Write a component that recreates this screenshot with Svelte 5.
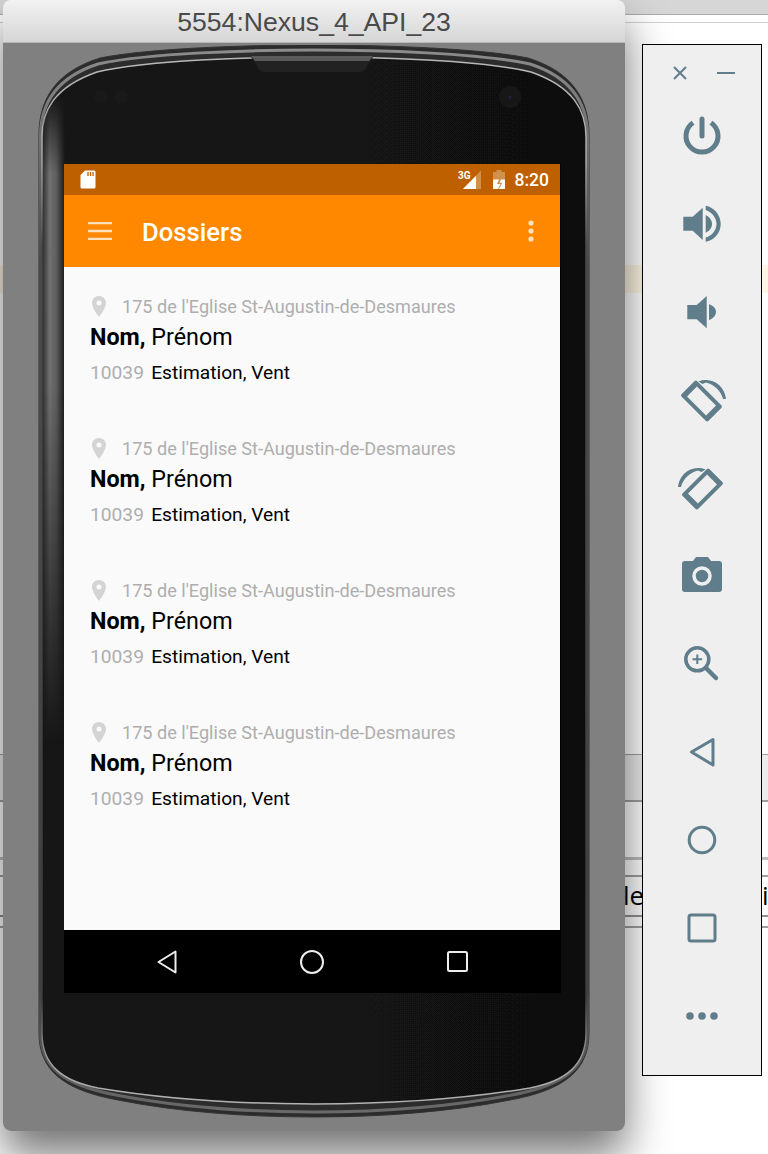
<script lang="ts">
  const rows = [1, 2, 3, 4];
  const bgLines = [
    { y: 754, h: 1, c: "#a0a0a0" },
    { y: 800, h: 2, c: "#a0a0a0" },
    { y: 857, h: 3, c: "#bdbdbd" },
    { y: 875, h: 2, c: "#a0a0a0" },
    { y: 915, h: 2, c: "#909090" },
    { y: 926, h: 2, c: "#a0a0a0" }
  ];
  const outerPath =
    "M1 90 C1 55 17 27 62 13 C112 3 212 0 276 0 C340 0 440 3 490 13 C535 27 551 55 551 90 L551 988 C551 1025 527 1045 472 1055 C412 1067 342 1072 276 1072 C210 1072 140 1067 80 1055 C25 1045 1 1025 1 988 Z";
  const midPath =
    "M2.5 91 C2.5 60 17 33 60 19 C111 8 212 5 276 5 C340 5 441 8 492 19 C535 33 549.5 60 549.5 91 L549.5 988 C549.5 1022 527 1040 474 1050 C412 1062 342 1067 276 1067 C210 1067 140 1062 78 1050 C25 1040 2.5 1022 2.5 988 Z";
  const innerPath =
    "M4 92 C4 66 16 42 59 27 C110 15 212 12 276 12 C340 12 442 15 493 27 C536 42 548 66 548 92 L548 988 C548 1020 528 1036 492 1043 C420 1055 340 1059 276 1059 C212 1059 132 1055 60 1043 C24 1036 4 1020 4 988 Z";
  const rotatePhone =
    "M2.5 10 H36.5 Q38.5 10 38.5 12 V30 Q38.5 32 36.5 32 H2.5 Q0.5 32 0.5 30 V12 Q0.5 10 2.5 10 Z M6 14 V28 H33 V14 Z";
  const rotateArc = "M16.5 1.5 C30 -4 43 6 44 19 L41 19 C39 11 33 5 24 2.5 L20.5 4 Z";
</script>

<div class="desktop">
  <div class="bg-top"></div>
  <div class="bg-top-line"></div>
  <div class="bg-fill"></div>
  {#each bgLines as line}
    <div class="bg-line" style="top: {line.y}px; height: {line.h}px; background: {line.c}"></div>
  {/each}
  <div class="bg-band"></div>
  <span class="bg-text">le</span>
  <span class="bg-text right">i</span>

  <section class="emulator">
    <header class="titlebar">5554:Nexus_4_API_23</header>
    <div class="stage">
      <svg class="phone" width="552" height="1074" viewBox="0 0 552 1074">
        <defs>
          <linearGradient id="rim" x1="0" y1="0" x2="0" y2="1">
            <stop offset="0" stop-color="#8c8c8c" />
            <stop offset="0.08" stop-color="#707070" />
            <stop offset="0.2" stop-color="#4a4a4a" />
            <stop offset="0.88" stop-color="#404040" />
            <stop offset="1" stop-color="#6a6a6a" />
          </linearGradient>
          <linearGradient id="shine" x1="0" y1="0" x2="0" y2="1">
            <stop offset="0" stop-color="#b8b8b8" />
            <stop offset="0.1" stop-color="#a8a8a8" />
            <stop offset="0.18" stop-color="#4a4a4a" />
            <stop offset="0.9" stop-color="#3c3c3c" />
            <stop offset="0.96" stop-color="#a0a0a0" />
            <stop offset="1" stop-color="#b4b4b4" />
          </linearGradient>
          <linearGradient id="glass" x1="0" y1="0" x2="1" y2="0">
            <stop offset="0" stop-color="#141414" />
            <stop offset="0.9" stop-color="#111" />
            <stop offset="0.97" stop-color="#090909" />
            <stop offset="1" stop-color="#0c0c0c" />
          </linearGradient>
          <linearGradient id="band" x1="0" y1="0" x2="1" y2="0">
            <stop offset="0" stop-color="#333" />
            <stop offset="0.3" stop-color="#707070" />
            <stop offset="0.6" stop-color="#5e5e5e" />
            <stop offset="1" stop-color="#161616" />
          </linearGradient>
          <linearGradient id="bandFade" x1="0" y1="0" x2="0" y2="1">
            <stop offset="0" stop-color="#000" />
            <stop offset="0.12" stop-color="#fff" />
            <stop offset="0.45" stop-color="#fff" />
            <stop offset="1" stop-color="#000" />
          </linearGradient>
          <mask id="bandMask" maskUnits="userSpaceOnUse" x="0" y="50" width="40" height="650">
            <rect x="0" y="50" width="40" height="650" fill="url(#bandFade)" />
          </mask>
          <clipPath id="innerClip"><path d={innerPath} /></clipPath>
          <filter id="soft" x="-2%" y="-2%" width="104%" height="104%">
            <feGaussianBlur stdDeviation="0.6" />
          </filter>
        </defs>
        <path d={outerPath} fill="#2c2c2c" stroke="#333" stroke-width="1" />
        <path d={midPath} fill="none" stroke="url(#rim)" stroke-width="3" filter="url(#soft)" />
        <path d={innerPath} fill="url(#glass)" stroke="url(#shine)" stroke-width="1.5" filter="url(#soft)" />
        <g clip-path="url(#innerClip)">
          <rect x="5" y="50" width="22" height="650" fill="url(#band)" mask="url(#bandMask)" />
        </g>
        <path d="M213 12 H335 L329 21 Q327 27 320 27 H228 Q221 27 219 21 Z" fill="#222" />
        <path d="M213 11 H335 L331 16 H217 Z" fill="#5a5a5a" />
        <circle cx="63" cy="52" r="7" fill="#191919" />
        <circle cx="83" cy="52" r="7" fill="#191919" />
        <circle cx="472" cy="52" r="11" fill="#171717" />
        <circle cx="472" cy="52" r="1.5" fill="#20204a" />
      </svg>

      <div class="screen">
        <div class="statusbar">
          <svg width="16" height="19" viewBox="0 0 16 19">
            <path d="M5 0.5 H14 Q15.5 0.5 15.5 2 V17 Q15.5 18.5 14 18.5 H2 Q0.5 18.5 0.5 17 V5 Z" fill="#fff" />
            <path d="M8 2 V6 M10.5 2 V6 M13 2 V6" stroke="#bf6000" stroke-width="1.3" />
          </svg>
          <div class="status-right">
            <svg class="signal" width="24" height="20" viewBox="0 0 24 20">
              <path d="M5 19 L23 0.5 V19 Z" fill="#fff" fill-opacity="0.3" />
              <path d="M5 19 L18 5.7 V19 Z" fill="#fff" />
              <text x="0" y="8.5" class="threeg">3G</text>
            </svg>
            <svg class="battery" width="12" height="19" viewBox="0 0 12 19">
              <path d="M3.5 0 H8.5 V2 H12 V19 H0 V2 H3.5 Z" fill="#fff" fill-opacity="0.3" />
              <path d="M0 9.5 H6 L4 14 H7.5 L5 19 H0 Z M8 9.5 H12 V19 H6 L9.2 12.8 H6.5 Z" fill="#fff" />
            </svg>
            <span class="time">8:20</span>
          </div>
        </div>

        <div class="appbar">
          <svg width="24" height="18" viewBox="0 0 24 18">
            <path d="M0 1 H24 M0 9 H24 M0 17 H24" stroke="#ffe0bc" stroke-width="2.4" />
          </svg>
          <h1>Dossiers</h1>
          <svg class="overflow" width="6" height="22" viewBox="0 0 6 22">
            <circle cx="3" cy="3" r="2.6" fill="#ffe0bc" />
            <circle cx="3" cy="11" r="2.6" fill="#ffe0bc" />
            <circle cx="3" cy="19" r="2.6" fill="#ffe0bc" />
          </svg>
        </div>

        <div class="list">
          {#each rows as r (r)}
            <article class="row">
              <div class="address">
                <svg width="14" height="21" viewBox="0 0 14 21">
                  <path fill-rule="evenodd" d="M7 0 C3 0 0 3 0 7 C0 12 7 21 7 21 C7 21 14 12 14 7 C14 3 11 0 7 0 Z M7 4.5 A2.5 2.5 0 1 1 7 9.5 A2.5 2.5 0 1 1 7 4.5 Z" fill="#d4d4d4" />
                </svg>
                <span>175 de l'Eglise St-Augustin-de-Desmaures</span>
              </div>
              <div class="name"><strong>Nom,</strong> Prénom</div>
              <div class="file"><span class="num">10039</span> Estimation, Vent</div>
            </article>
          {/each}
        </div>

        <nav class="navbar">
          <svg width="20" height="24" viewBox="0 0 20 24">
            <path d="M1.5 12 L18.5 1.5 V22.5 Z" fill="none" stroke="#eee" stroke-width="2" stroke-linejoin="round" />
          </svg>
          <svg width="24" height="24" viewBox="0 0 24 24">
            <circle cx="12" cy="12" r="11" fill="none" stroke="#eee" stroke-width="2" />
          </svg>
          <svg width="21" height="21" viewBox="0 0 21 21">
            <rect x="1" y="1" width="19" height="19" rx="1.5" fill="none" stroke="#eee" stroke-width="2" />
          </svg>
        </nav>
      </div>
    </div>
  </section>

  <aside class="toolbar">
    <div class="win-controls">
      <svg width="14" height="14" viewBox="0 0 14 14">
        <path d="M1 1 L13 13 M13 1 L1 13" stroke="#607d8b" stroke-width="2" />
      </svg>
      <svg width="18" height="14" viewBox="0 0 18 14">
        <path d="M0 7 H18" stroke="#607d8b" stroke-width="2" />
      </svg>
    </div>
    <div class="tools">
      <svg viewBox="0 0 40 40" width="40" height="40">
        <path d="M11.05 6.74 A16 16 0 1 0 28.95 6.74" fill="none" stroke="#607d8b" stroke-width="5" />
        <path d="M20 3 V20" stroke="#607d8b" stroke-width="5" stroke-linecap="round" />
      </svg>
      <svg viewBox="0 0 40 40" width="40" height="40">
        <path d="M1.3 12.7 H10.7 L20.7 3.7 V36 L10.7 26.7 H1.3 Z" fill="#607d8b" />
        <path d="M23.7 11 C27 12.5 30 16 30 20 C30 24 27 27.3 23.7 28.7 Z" fill="#607d8b" />
        <path d="M23.7 1.7 C32 3 38.7 11 38.7 20 C38.7 29 32 36.5 23.7 37.7 V33.5 C30 32 34.5 26 34.5 20 C34.5 14 30 8 23.7 6 Z" fill="#607d8b" />
      </svg>
      <svg viewBox="0 0 40 40" width="40" height="40">
        <path d="M5.3 13 H14.7 L24.7 4 V36.3 L14.7 27.3 H5.3 Z" fill="#607d8b" />
        <path d="M27 12.3 C31 13.5 34 16.5 34 20 C34 23.5 31 26.8 27 28 Z" fill="#607d8b" />
      </svg>
      <svg class="over" viewBox="0 0 40 40" width="40" height="40">
        <g transform="rotate(45 19.5 21)">
          <path fill-rule="evenodd" fill="#607d8b" d={rotatePhone} />
        </g>
        <path d={rotateArc} fill="#607d8b" />
      </svg>
      <svg class="over" viewBox="0 0 40 40" width="40" height="40">
        <g transform="matrix(-1 0 0 1 40 0)">
          <g transform="rotate(45 19.5 21)">
            <path fill-rule="evenodd" fill="#607d8b" d={rotatePhone} />
          </g>
          <path d={rotateArc} fill="#607d8b" />
        </g>
      </svg>
      <svg viewBox="0 0 40 40" width="40" height="40">
        <path d="M3 5 H11 L14 1 H26 L29 5 H37 Q40 5 40 8 V33 Q40 36 37 36 H3 Q0 36 0 33 V8 Q0 5 3 5 Z" fill="#607d8b" />
        <circle cx="20" cy="20" r="8" fill="#607d8b" stroke="#efefef" stroke-width="3.5" />
      </svg>
      <svg viewBox="0 0 40 40" width="40" height="40">
        <circle cx="15.3" cy="15.3" r="11.5" fill="none" stroke="#607d8b" stroke-width="3.5" />
        <path d="M10.5 15.3 H20.1 M15.3 10.5 V20.1" stroke="#607d8b" stroke-width="2" />
        <path d="M24 24 L34 34" stroke="#607d8b" stroke-width="4.5" stroke-linecap="round" />
      </svg>
      <svg viewBox="0 0 40 40" width="40" height="40">
        <path d="M9.5 20 L31 7.5 V33 Z" fill="none" stroke="#607d8b" stroke-width="3" stroke-linejoin="round" />
      </svg>
      <svg viewBox="0 0 40 40" width="40" height="40">
        <circle cx="20" cy="20" r="12.8" fill="none" stroke="#607d8b" stroke-width="3" />
      </svg>
      <svg viewBox="0 0 40 40" width="40" height="40">
        <rect x="7" y="7" width="26" height="26" rx="2" fill="none" stroke="#607d8b" stroke-width="3" />
      </svg>
      <svg viewBox="0 0 40 40" width="40" height="40">
        <circle cx="8" cy="20" r="3.8" fill="#607d8b" />
        <circle cx="20" cy="20" r="3.8" fill="#607d8b" />
        <circle cx="32" cy="20" r="3.8" fill="#607d8b" />
      </svg>
    </div>
  </aside>
</div>

<style>
  :global(body) {
    margin: 0;
    background: #fff;
  }

  .desktop {
    position: relative;
    width: 768px;
    height: 1154px;
    overflow: hidden;
    background: #fff;
    font-family: Roboto, "Liberation Sans", sans-serif;
  }

  .bg-top {
    position: absolute;
    left: 0;
    right: 0;
    top: 0;
    height: 14px;
    background: #d6d6d6;
    border-bottom: 1px solid #ababab;
  }

  .bg-top-line {
    position: absolute;
    left: 0;
    right: 0;
    top: 22px;
    height: 1px;
    background: #d0d0d0;
  }

  .bg-fill {
    position: absolute;
    left: 0;
    right: 0;
    top: 755px;
    height: 45px;
    background: #ececec;
  }

  .bg-line {
    position: absolute;
    left: 0;
    right: 0;
  }

  .bg-band {
    position: absolute;
    left: 0;
    right: 0;
    top: 265px;
    height: 28px;
    background: #fdf6e3;
  }

  .bg-text {
    position: absolute;
    left: 623px;
    top: 880px;
    font-size: 26px;
    line-height: 30px;
    color: #000;
    font-family: "Open Sans", sans-serif;
  }

  .bg-text.right {
    left: 762px;
  }

  .emulator {
    position: absolute;
    left: 3px;
    top: 0;
    width: 622px;
    height: 1131px;
    border-radius: 8px;
    overflow: hidden;
    box-shadow: 0 24px 44px rgba(0, 0, 0, 0.55);
    display: flex;
    flex-direction: column;
  }

  .titlebar {
    height: 43px;
    flex-shrink: 0;
    display: flex;
    align-items: center;
    justify-content: center;
    padding-top: 2px;
    background: linear-gradient(#f2f2f2, #d6d6d6);
    border-bottom: 1px solid #b8b8b8;
    box-sizing: border-box;
    font-family: "Liberation Sans", Arial, sans-serif;
    font-size: 26.6px;
    color: #4a4a4a;
  }

  .stage {
    position: relative;
    flex: 1;
    background: #808080;
  }

  .phone {
    position: absolute;
    left: 35px;
    top: 2px;
  }

  .screen {
    position: absolute;
    left: 61px;
    top: 121px;
    width: 497px;
    height: 829px;
    display: flex;
    flex-direction: column;
    background: #000;
  }

  .statusbar {
    height: 31px;
    width: 496px;
    flex-shrink: 0;
    box-sizing: border-box;
    padding: 0 11px 0 16px;
    display: flex;
    align-items: center;
    justify-content: space-between;
    background: #bf6000;
  }

  .status-right {
    display: flex;
    align-items: center;
  }

  .signal {
    overflow: visible;
    margin-right: 11px;
  }

  .threeg {
    font-size: 10px;
    font-weight: 700;
    fill: #fff;
    font-family: Roboto, sans-serif;
  }

  .battery {
    margin-right: 10px;
  }

  .time {
    color: #fff;
    font-size: 17.5px;
    font-weight: 500;
  }

  .appbar {
    height: 72px;
    width: 496px;
    flex-shrink: 0;
    box-sizing: border-box;
    padding: 0 26px 0 24px;
    display: flex;
    align-items: center;
    background: #ff8800;
  }

  .appbar h1 {
    margin: 2px 0 0 30px;
    flex: 1;
    font-size: 25.7px;
    font-weight: 500;
    color: #fff;
  }

  .list {
    flex: 1;
    width: 496px;
    box-sizing: border-box;
    padding: 25px 0 0 26px;
    background: #fafafa;
  }

  .row {
    height: 142px;
  }

  .address {
    display: flex;
    align-items: center;
    height: 28px;
    padding-left: 2px;
    font-size: 18.1px;
    color: #aeaeae;
  }

  .address span {
    margin-left: 16px;
  }

  .name {
    margin-top: 2px;
    font-size: 23.3px;
    line-height: 30px;
    color: #000;
  }

  .file {
    margin-top: 7px;
    font-size: 19.2px;
    line-height: 28px;
    color: #000;
  }

  .num {
    color: #aeaeae;
    margin-right: 2.5px;
  }

  .navbar {
    height: 63px;
    flex-shrink: 0;
    box-sizing: border-box;
    padding: 0 93px;
    display: flex;
    align-items: center;
    justify-content: space-between;
    background: #000;
  }

  .toolbar {
    position: absolute;
    left: 642px;
    top: 44px;
    width: 120px;
    height: 1032px;
    box-sizing: border-box;
    border: 1px solid #000;
    background: #efefef;
    display: flex;
    flex-direction: column;
    align-items: center;
  }

  .win-controls {
    height: 28px;
    margin-top: 14px;
    width: 100%;
    box-sizing: border-box;
    padding: 0 26px 0 30px;
    display: flex;
    align-items: center;
    justify-content: space-between;
  }

  .tools {
    margin-top: 29px;
    display: flex;
    flex-direction: column;
    gap: 48px;
  }

  .tools svg {
    display: block;
  }

  .tools .over {
    overflow: visible;
  }
</style>
